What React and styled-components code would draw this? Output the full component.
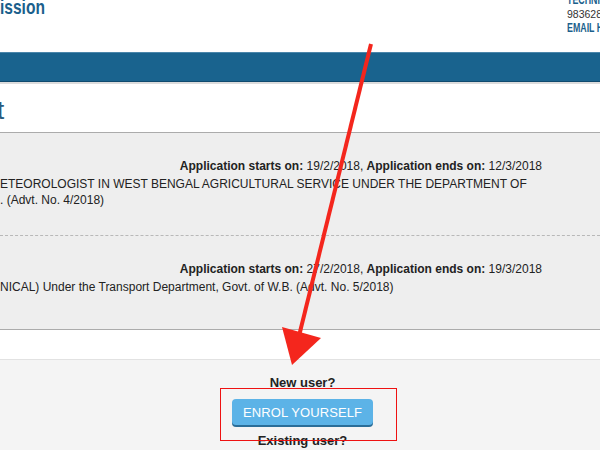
import React from 'react';
import styled, { createGlobalStyle } from 'styled-components';

const GlobalStyle = createGlobalStyle`
    html, body {
        margin: 0;
        padding: 0;
        width: 600px;
        height: 450px;
        overflow: hidden;
        background: #f4f4f4;
        font-family: "Liberation Sans", Arial, sans-serif;
    }
`;

const Page = styled.div`
    position: relative;
    width: 600px;
    height: 450px;
    overflow: hidden;
`;

const Header = styled.header`
    height: 52px;
    background: #fff;
    display: flex;
    justify-content: space-between;
`;

const Brand = styled.div`
    font-weight: bold;
    font-size: 21px;
    line-height: 20px;
    color: #1b5f8c;
    margin-top: -3px;
    transform: scaleX(0.74);
    transform-origin: left center;
`;

const Contact = styled.div`
    width: 33px;
    flex-shrink: 0;
    white-space: nowrap;
    margin-top: -7px;
`;

const ContactLine = styled.div`
    font-weight: ${p => p.strong ? 'bold' : 'normal'};
    color: ${p => p.strong ? '#1b5f8c' : '#333'};
    font-size: ${p => p.strong ? '13px' : '10.5px'};
    line-height: 14px;
    transform: ${p => p.strong ? 'scaleX(0.68)' : 'none'};
    transform-origin: left center;
`;

const NavBar = styled.nav`
    height: 28px;
    background: #19638e;
    border-top: 1px solid #4a86ab;
    border-bottom: 1px solid #0f4a6e;
    box-shadow: 0 2px 0 #dcdcdc;
`;

const TitleBar = styled.div`
    height: 48px;
    margin-top: 2px;
    background: #fff;
    display: flex;
    align-items: center;
`;

const Title = styled.h1`
    margin: 4px 0 0 -3px;
    font-size: 26px;
    font-weight: normal;
    color: #2a5b7e;
`;

const Panel = styled.section`
    background: #eeeeee;
    border-top: 1px solid #ababab;
    border-bottom: 1px solid #ababab;
`;

const Item = styled.div`
    min-height: ${p => p.height}px;
    box-sizing: border-box;
    padding: 25px 58px 0 0;
    border-bottom: ${p => p.last ? 'none' : '1px dashed #b8b8b8'};
    font-size: 12px;
    line-height: 16px;
    color: #222;
`;

const Dates = styled.div`
    text-align: right;
    margin-bottom: 2px;
    white-space: nowrap;
    b {
        font-weight: bold;
    }
`;

const PostName = styled.div`
    white-space: nowrap;
`;

const Gap = styled.div`
    height: 29px;
    background: #fff;
    border-bottom: 1px solid #e2e2e2;
`;

const Enrol = styled.div`
    display: flex;
    flex-direction: column;
    align-items: center;
    padding: 15px 0 0 5px;
    color: #222;
    font-size: 13px;
    font-weight: bold;
`;

const Question = styled.div`
    line-height: 16px;
`;

const EnrolButton = styled.button`
    margin: 8px 0 8px;
    width: 141px;
    height: 26px;
    border: none;
    border-radius: 4px;
    background: #5cb3e7;
    box-shadow: 0 2px 0 #2a6d98;
    color: #fff;
    font-family: "Liberation Sans", Arial, sans-serif;
    font-size: 13px;
    font-weight: normal;
    letter-spacing: 0.1px;
    cursor: pointer;
`;

const Annotation = styled.svg`
    position: absolute;
    left: 0;
    top: 0;
    pointer-events: none;
`;

const items = [
    {
        starts: '19/2/2018',
        ends: '12/3/2018',
        lines: ['ETEOROLOGIST IN WEST BENGAL AGRICULTURAL SERVICE UNDER THE DEPARTMENT OF', '. (Advt. No. 4/2018)'],
        height: 103,
    },
    {
        starts: '27/2/2018',
        ends: '19/3/2018',
        lines: ['NICAL) Under the Transport Department, Govt. of W.B. (Advt. No. 5/2018)'],
        height: 93,
    },
];

export default function App() {
    return (
        <Page>
            <GlobalStyle />
            <Header>
                <Brand>ission</Brand>
                <Contact>
                    <ContactLine strong>TECHNICAL</ContactLine>
                    <ContactLine>9836281000</ContactLine>
                    <ContactLine strong>EMAIL HELP</ContactLine>
                </Contact>
            </Header>
            <NavBar />
            <TitleBar>
                <Title>t</Title>
            </TitleBar>
            <Panel>
                {items.map((item, i) => (
                    <Item key={i} height={item.height} last={i === items.length - 1}>
                        <Dates>
                            <b>Application starts on:</b> {item.starts}, <b>Application ends on:</b> {item.ends}
                        </Dates>
                        {item.lines.map(line => <PostName key={line}>{line}</PostName>)}
                    </Item>
                ))}
            </Panel>
            <Gap />
            <Enrol>
                <Question>New user?</Question>
                <EnrolButton>ENROL YOURSELF</EnrolButton>
                <Question>Existing user?</Question>
            </Enrol>
            <Annotation width="600" height="450" viewBox="0 0 600 450">
                <line x1="371" y1="44" x2="299" y2="336" stroke="#f4261d" strokeWidth="4" />
                <polygon points="282,327 321,338 292,365" fill="#f4261d" />
                <rect x="220.5" y="388.5" width="176" height="52" fill="none" stroke="#ee1111" strokeWidth="1" />
            </Annotation>
        </Page>
    );
}
